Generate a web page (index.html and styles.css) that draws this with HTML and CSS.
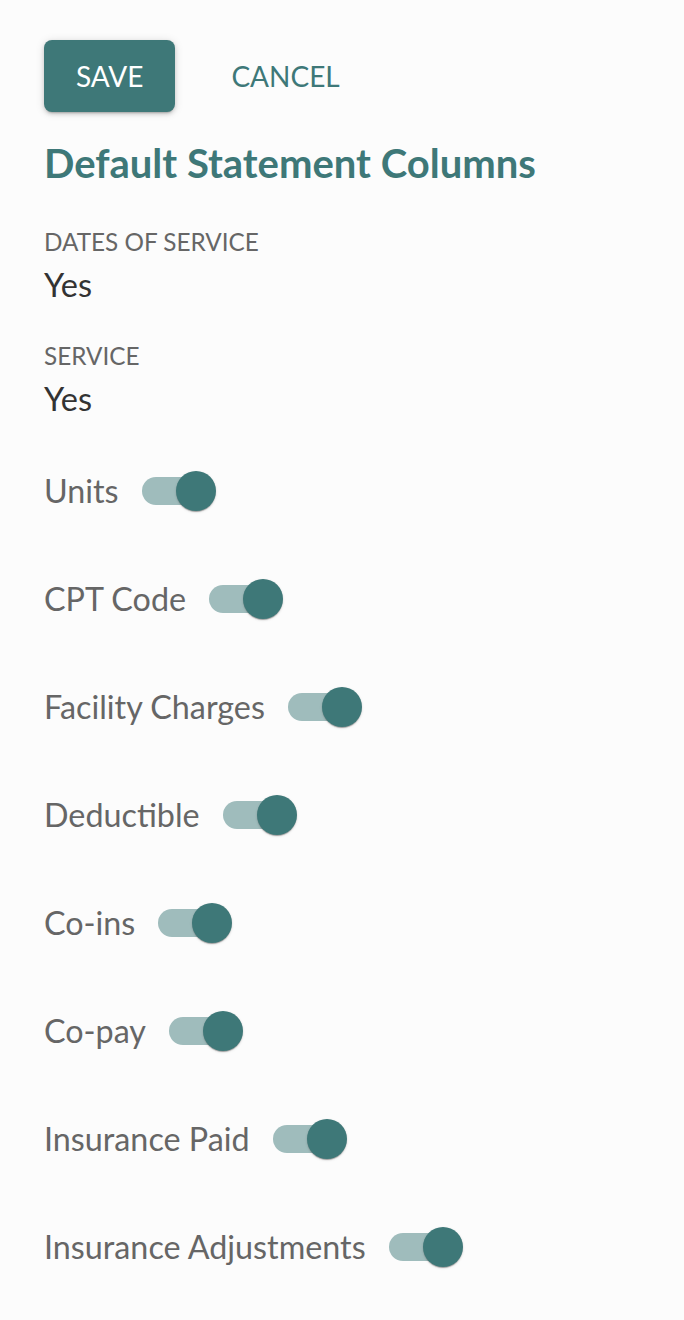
FILE: index.html
```html
<!DOCTYPE html>
<html lang="en">
<head>
    <meta charset="UTF-8">
    <meta name="viewport" content="width=device-width, initial-scale=1.0">
    <title>Statement Columns</title>
    <link rel="stylesheet" href="styles.css">
</head>
<body>
    <div class="container">
        <div class="actions">
            <button class="btn btn-primary" type="button">Save</button>
            <button class="btn btn-text" type="button">Cancel</button>
        </div>

        <h2 class="title">Default Statement Columns</h2>

        <div class="fields">
            <div class="field">
                <div class="field-label">Dates of Service</div>
                <div class="field-value">Yes</div>
            </div>
            <div class="field">
                <div class="field-label">Service</div>
                <div class="field-value">Yes</div>
            </div>
        </div>

        <div class="toggles">
            <label class="toggle-row">
                <span class="toggle-label">Units</span>
                <span class="switch"><span class="track"></span><span class="thumb"></span></span>
            </label>
            <label class="toggle-row">
                <span class="toggle-label">CPT Code</span>
                <span class="switch"><span class="track"></span><span class="thumb"></span></span>
            </label>
            <label class="toggle-row">
                <span class="toggle-label">Facility Charges</span>
                <span class="switch"><span class="track"></span><span class="thumb"></span></span>
            </label>
            <label class="toggle-row">
                <span class="toggle-label">Deductible</span>
                <span class="switch"><span class="track"></span><span class="thumb"></span></span>
            </label>
            <label class="toggle-row">
                <span class="toggle-label">Co-ins</span>
                <span class="switch"><span class="track"></span><span class="thumb"></span></span>
            </label>
            <label class="toggle-row">
                <span class="toggle-label">Co-pay</span>
                <span class="switch"><span class="track"></span><span class="thumb"></span></span>
            </label>
            <label class="toggle-row">
                <span class="toggle-label">Insurance Paid</span>
                <span class="switch"><span class="track"></span><span class="thumb"></span></span>
            </label>
            <label class="toggle-row">
                <span class="toggle-label">Insurance Adjustments</span>
                <span class="switch"><span class="track"></span><span class="thumb"></span></span>
            </label>
        </div>
    </div>
</body>
</html>
```

FILE: styles.css
```css
body {
    margin: 0;
    background-color: #fcfcfc;
    font-family: Lato, 'Open Sans', sans-serif;
    color: #333;
}
.container {
    padding: 40px 44px;
}
.actions {
    display: flex;
    gap: 24px;
}
.btn {
    height: 72px;
    padding: 0 32px;
    border: none;
    border-radius: 8px;
    font-family: inherit;
    font-size: 28px;
    text-transform: uppercase;
    cursor: pointer;
}
.btn-primary {
    background-color: #3e7878;
    color: #fff;
    box-shadow: 0 3px 2px -2px rgba(0, 0, 0, 0.2), 0 2px 4px 0 rgba(0, 0, 0, 0.14), 0 1px 10px 0 rgba(0, 0, 0, 0.12);
}
.btn-text {
    background: transparent;
    color: #3e7878;
}
.title {
    margin: 28px 0 0;
    font-size: 40px;
    line-height: 46px;
    font-weight: 700;
    color: #3e7878;
}
.fields {
    margin-top: 42px;
    display: flex;
    flex-direction: column;
    gap: 38px;
}
.field-label {
    font-size: 24.3px;
    line-height: 28px;
    text-transform: uppercase;
    color: #666;
}
.field-value {
    margin-top: 10px;
    font-size: 32.5px;
    line-height: 38px;
    color: #333;
}
.toggles {
    margin-top: 35px;
    display: flex;
    flex-direction: column;
    gap: 32px;
}
.toggle-row {
    display: flex;
    align-items: center;
    height: 76px;
    gap: 23px;
}
.toggle-label {
    font-size: 32.3px;
    line-height: 38px;
    color: #666;
}
.switch {
    position: relative;
    width: 74px;
    height: 40px;
}
.track {
    position: absolute;
    left: 0;
    top: 6px;
    width: 68px;
    height: 28px;
    border-radius: 14px;
    background-color: #9fbcbc;
}
.thumb {
    position: absolute;
    left: 34px;
    top: 0;
    width: 40px;
    height: 40px;
    border-radius: 50%;
    background-color: #3e7878;
    box-shadow: 0 2px 1px -1px rgba(0, 0, 0, 0.2), 0 1px 1px 0 rgba(0, 0, 0, 0.14), 0 1px 3px 0 rgba(0, 0, 0, 0.12);
}
```
